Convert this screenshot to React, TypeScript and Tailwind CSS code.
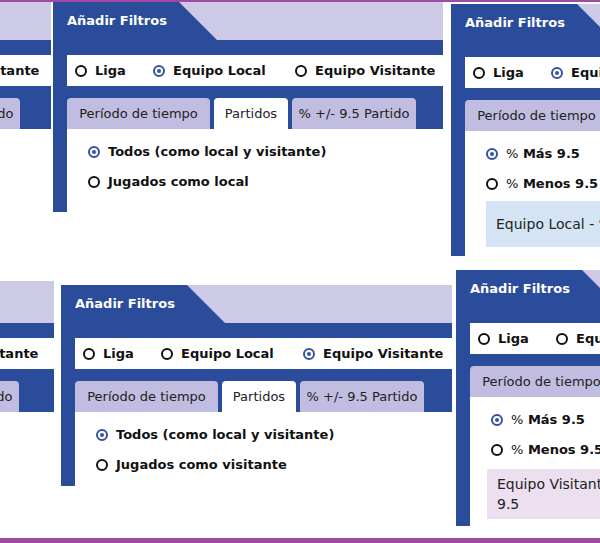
import React from 'react';

type Scope = 'liga' | 'local' | 'visitante';

function Radio({ checked }: { checked?: boolean }) {
  if (checked) {
    return (
      <span className="flex h-[12px] w-[12px] shrink-0 items-center justify-center rounded-full border-2 border-[#3552a3]">
        <span className="h-[4px] w-[4px] rounded-full bg-[#3552a3]" />
      </span>
    );
  }
  return <span className="h-[12px] w-[12px] shrink-0 rounded-full border-2 border-[#111]" />;
}

function Option({ checked, children }: { checked?: boolean; children: React.ReactNode }) {
  return (
    <div className="flex h-[30px] items-center gap-[8px] text-[13px] font-bold text-[#111] whitespace-nowrap">
      <Radio checked={checked} />
      <span>{children}</span>
    </div>
  );
}

function FilterPanel({
  pos,
  headerH = 'h-[38px]',
  bodyH,
  scope,
  tab,
  children,
}: {
  pos: string;
  headerH?: string;
  bodyH: string;
  scope: Scope;
  tab: number;
  children?: React.ReactNode;
}) {
  const tabs = [
    { label: 'Período de tiempo', w: 'w-[143px]' },
    { label: 'Partidos', w: 'w-[74px]' },
    { label: '% +/- 9.5 Partido', w: 'w-[124px]' },
  ];

  return (
    <div className={`absolute bg-[#2b4c9b] ${pos}`}>
      {/* Header */}
      <div className={`flex bg-[#cccae6] ${headerH}`}>
        <div className="flex w-[126px] items-center bg-[#2b4c9b] pl-[14px] text-[13px] font-bold text-white whitespace-nowrap">
          Añadir Filtros
        </div>
        <svg className="h-full w-[38px]" viewBox="0 0 38 38" preserveAspectRatio="none">
          <polygon points="0,0 38,38 0,38" fill="#2b4c9b" />
        </svg>
      </div>

      {/* Scope */}
      <div className="ml-[14px] mt-[15px] flex h-[31px] items-center bg-white pl-[8px] text-[13px] font-bold text-[#111] whitespace-nowrap">
        <div className="flex w-[78px] items-center gap-[8px]">
          <Radio checked={scope === 'liga'} />
          <span>Liga</span>
        </div>
        <div className="flex w-[142px] items-center gap-[8px]">
          <Radio checked={scope === 'local'} />
          <span>Equipo Local</span>
        </div>
        <div className="flex items-center gap-[8px]">
          <Radio checked={scope === 'visitante'} />
          <span>Equipo Visitante</span>
        </div>
      </div>

      {/* Tabs */}
      <div className="ml-[14px] mt-[12px] flex h-[31px] gap-[4px]">
        {tabs.map((t, i) => (
          <div
            key={t.label}
            className={`${t.w} flex shrink-0 items-center justify-center rounded-t-[4px] text-[13px] text-[#222] whitespace-nowrap ${
              i === tab ? 'bg-white' : 'bg-[#c0bde0]'
            }`}
          >
            {t.label}
          </div>
        ))}
      </div>

      {/* Body */}
      <div className={`ml-[14px] bg-white pl-[21px] pt-[8px] ${bodyH}`}>{children}</div>
    </div>
  );
}

export default function App() {
  return (
    <div className="relative flex h-[543px] w-[600px] flex-col overflow-hidden bg-white font-['DejaVu_Sans',sans-serif]">
      <div className="h-[2px] bg-[#a04ba0]" />
      <div className="flex-1" />
      <div className="h-[5px] bg-[#a04ba0]" />

      {/* Top row */}
      <FilterPanel pos="left-[-343px] top-[2px] w-[394px]" bodyH="h-[83px]" scope="visitante" tab={1}>
        <Option checked>Todos (como local y visitante)</Option>
        <Option>Jugados como visitante</Option>
      </FilterPanel>

      <FilterPanel pos="left-[53px] top-[2px] w-[390px]" bodyH="h-[83px]" scope="local" tab={1}>
        <Option checked>Todos (como local y visitante)</Option>
        <Option>Jugados como local</Option>
      </FilterPanel>

      <FilterPanel pos="left-[451px] top-[4px] w-[390px]" bodyH="h-[125px]" scope="local" tab={2}>
        <Option checked>
          <span className="font-normal">%</span> Más 9.5
        </Option>
        <Option>
          <span className="font-normal">%</span> Menos 9.5
        </Option>
        <div className="mr-[20px] mt-[2px] bg-[#d5e4f5] px-[10px] py-[13px] text-[14px] leading-[20px] text-[#222] whitespace-nowrap">
          Equipo Local - % Más 9.5 en el partido
        </div>
      </FilterPanel>

      {/* Bottom row */}
      <FilterPanel
        pos="left-[-344px] top-[281px] w-[398px]"
        headerH="h-[42px]"
        bodyH="h-[74px]"
        scope="visitante"
        tab={1}
      >
        <Option checked>Todos (como local y visitante)</Option>
        <Option>Jugados como visitante</Option>
      </FilterPanel>

      <FilterPanel pos="left-[61px] top-[285px] w-[391px]" bodyH="h-[74px]" scope="visitante" tab={1}>
        <Option checked>Todos (como local y visitante)</Option>
        <Option>Jugados como visitante</Option>
      </FilterPanel>

      <FilterPanel pos="left-[456px] top-[270px] w-[390px]" bodyH="h-[129px]" scope="visitante" tab={2}>
        <Option checked>
          <span className="font-normal">%</span> Más 9.5
        </Option>
        <Option>
          <span className="font-normal">%</span> Menos 9.5
        </Option>
        <div className="-ml-[4px] mr-[20px] mt-[4px] bg-[#ebdff0] px-[10px] py-[5px] text-[14px] leading-[20px] text-[#222] whitespace-nowrap">
          Equipo Visitante - % Más 9.5 por partido, mayor a
          <br />
          9.5
        </div>
      </FilterPanel>
    </div>
  );
}
